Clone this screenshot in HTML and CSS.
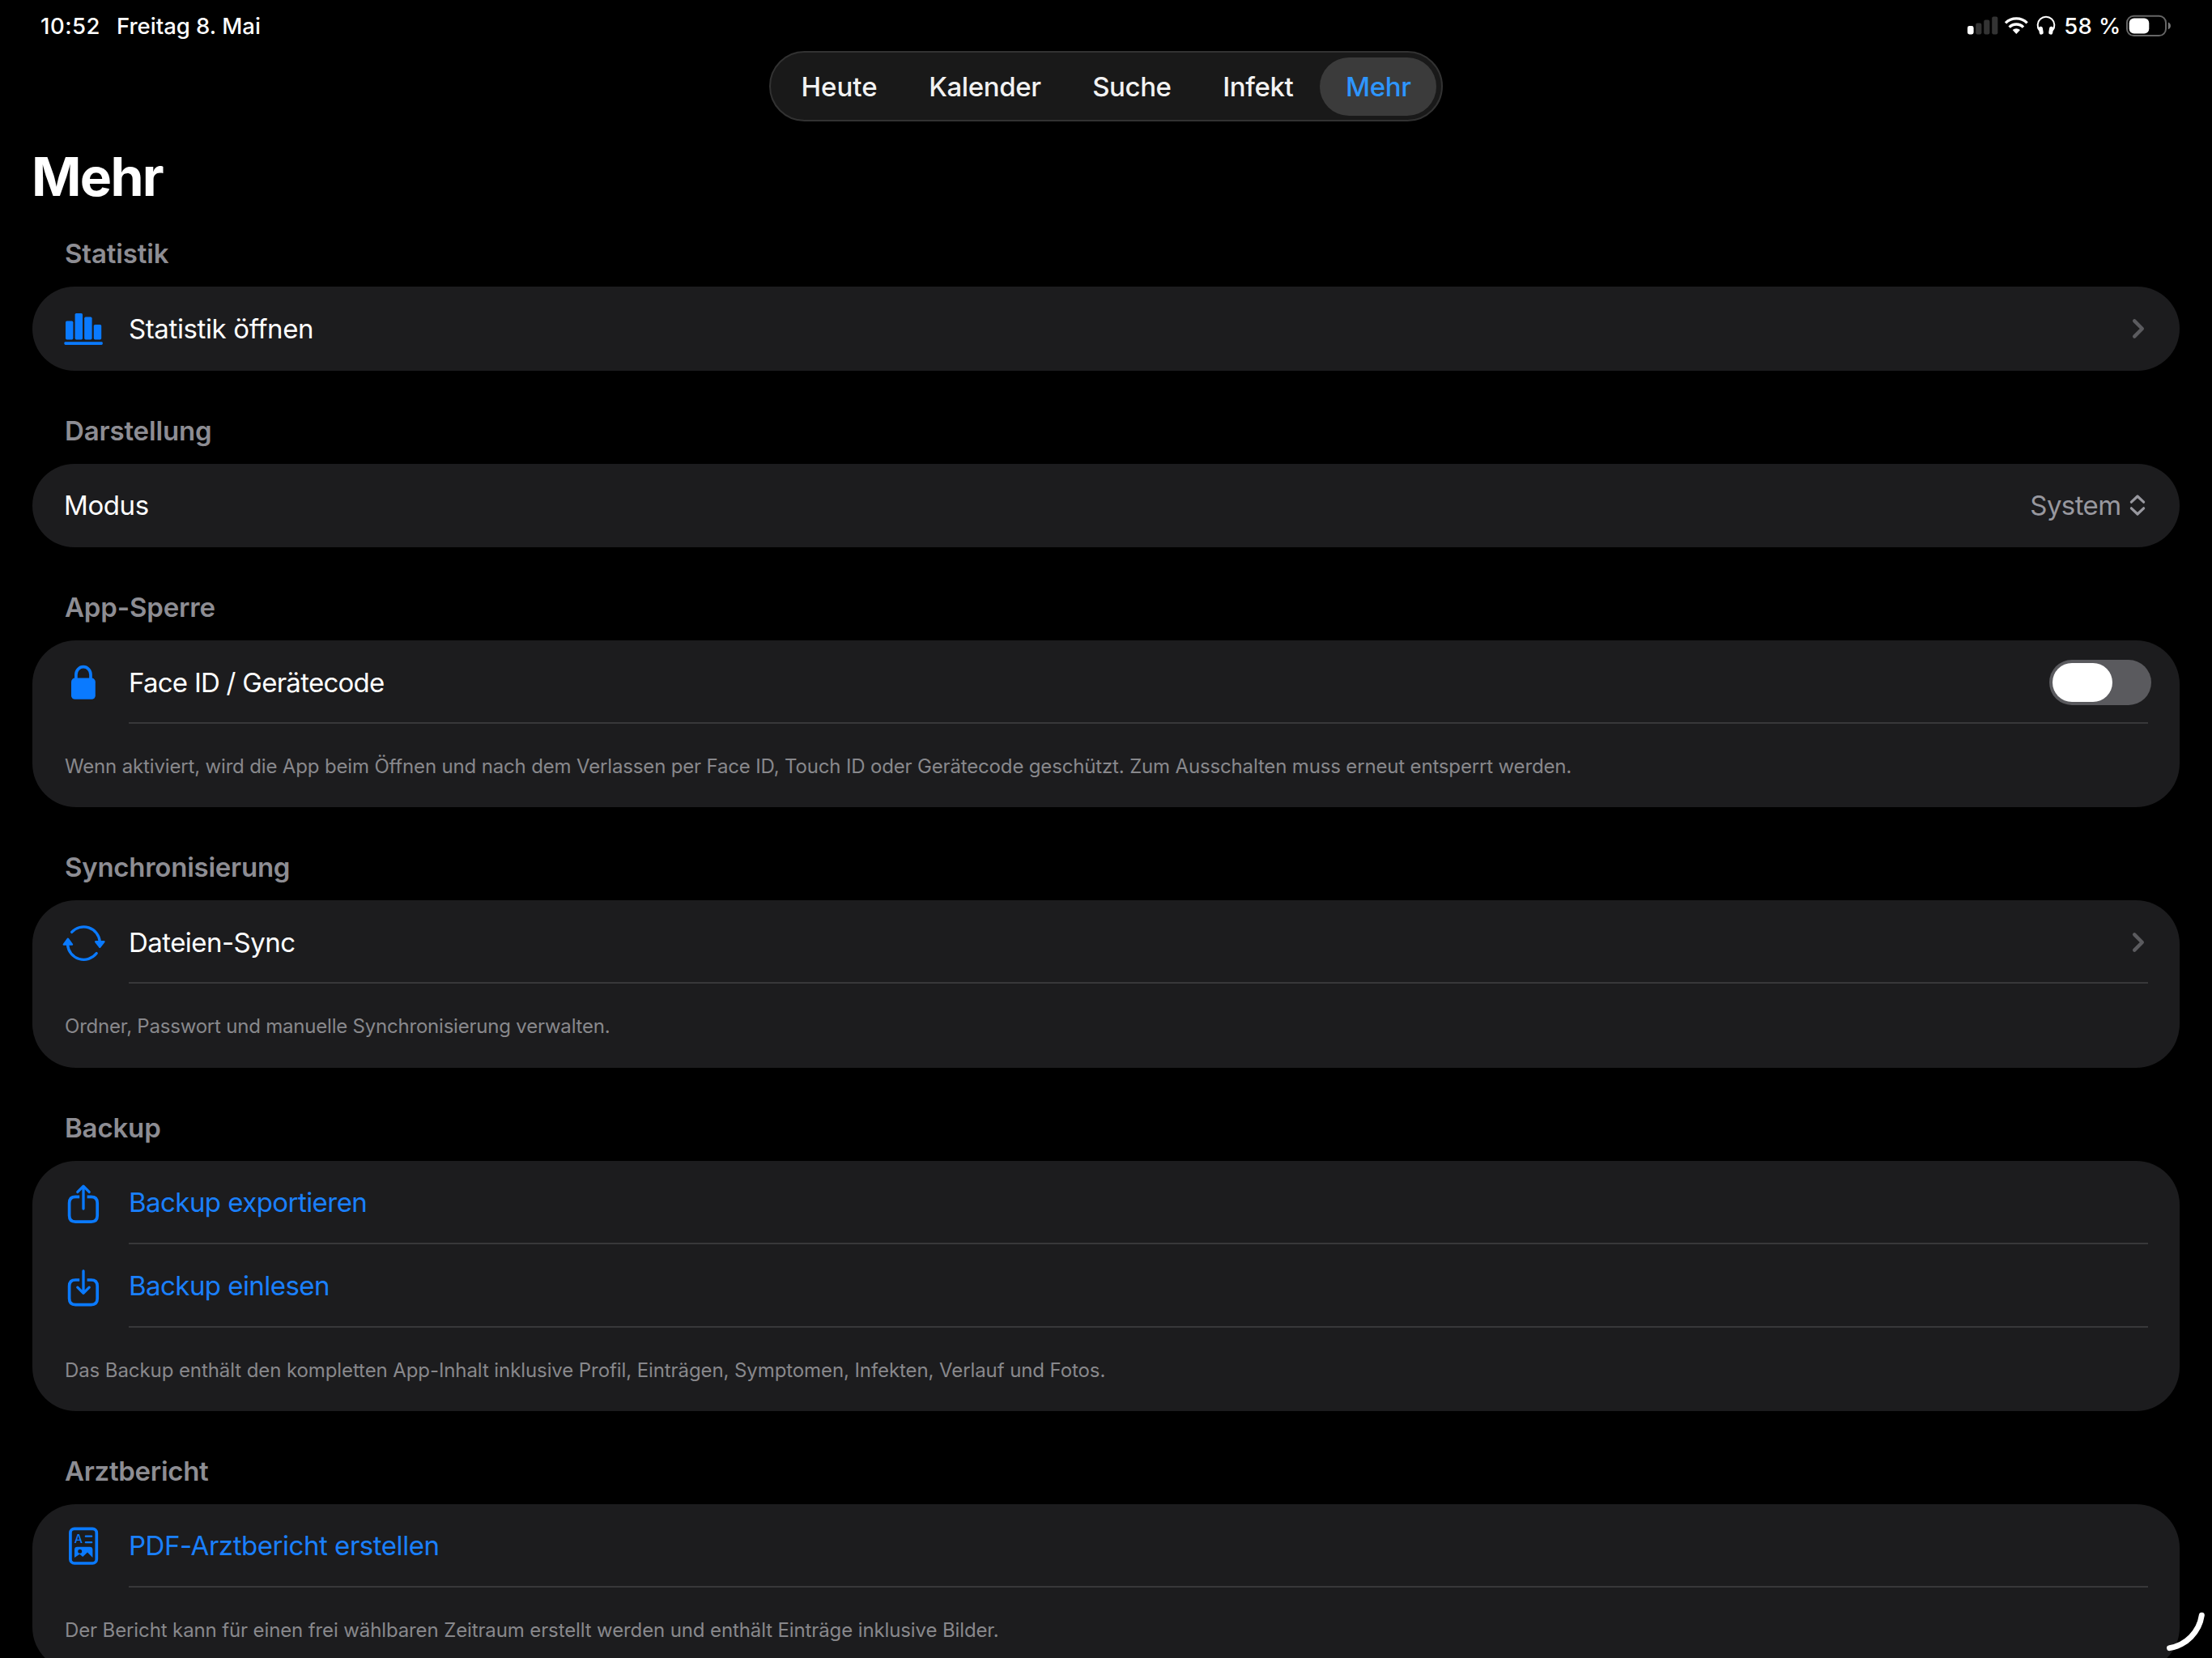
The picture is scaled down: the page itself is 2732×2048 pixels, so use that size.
FILE: index.html
```html
<!DOCTYPE html>
<html lang="de">
<head>
    <meta charset="UTF-8">
    <meta name="viewport" content="width=device-width, initial-scale=1.0">
    <title>Mehr</title>
    <link rel="stylesheet" href="styles.css">
</head>
<body>
    <div class="status-bar">
        <div class="status-left">
            <span class="time">10:52</span>
            <span>Freitag 8. Mai</span>
        </div>
        <div class="status-right">
            <svg class="signal" viewBox="0 0 38 24">
                <rect x="0" y="12" width="7.6" height="10.4" rx="2.4" fill="#fff"/>
                <rect x="10.2" y="8.6" width="7.2" height="13.8" rx="2.2" fill="#333"/>
                <rect x="20.2" y="4.6" width="7.2" height="17.8" rx="2.2" fill="#333"/>
                <rect x="30.2" y="0.4" width="7.2" height="22" rx="2.2" fill="#333"/>
            </svg>
            <svg class="wifi" viewBox="161 25 90 69">
                <path d="M167 50A57 57 0 0 1 247 50M181 66A36 36 0 0 1 233 66" fill="none" stroke="#fff" stroke-width="10"/>
                <path d="M193 76A21 21 0 0 1 221 76L207 91Z" fill="#fff"/>
            </svg>
            <svg class="headphones" viewBox="281 24 72 74">
                <path d="M293 80A31 31 0 1 1 341 80" fill="none" stroke="#fff" stroke-width="6"/>
                <rect x="291" y="65" width="15" height="30" rx="7" fill="#fff" transform="rotate(-9 298 80)"/>
                <rect x="328" y="65" width="15" height="30" rx="7" fill="#fff" transform="rotate(9 336 80)"/>
            </svg>
            <span class="percent">58 %</span>
            <svg class="battery" viewBox="0 0 56 28">
                <rect x="1" y="1.7" width="48" height="24.4" rx="8.4" fill="none" stroke="#666" stroke-width="2"/>
                <rect x="3.7" y="4.4" width="24.6" height="19" rx="6" fill="#fff"/>
                <path d="M51.8 9.4C56 11 56 16.6 51.8 18.2Z" fill="#777"/>
            </svg>
        </div>
    </div>

    <nav class="tabs">
        <a class="tab heute">Heute</a>
        <a class="tab">Kalender</a>
        <a class="tab">Suche</a>
        <a class="tab">Infekt</a>
        <a class="tab active">Mehr</a>
    </nav>

    <main>
        <h1>Mehr</h1>

        <section class="statistik">
            <h2>Statistik</h2>
            <div class="card single">
                <div class="row">
                    <svg class="icon" viewBox="0 0 56 56">
                        <rect x="6" y="18.6" width="9.4" height="22.8" rx="1.6"/>
                        <rect x="17.6" y="9" width="9.4" height="32.4" rx="1.6"/>
                        <rect x="29.2" y="13.6" width="9.4" height="27.8" rx="1.6"/>
                        <rect x="40.8" y="23" width="9.4" height="18.4" rx="1.6"/>
                        <rect x="4.4" y="44.2" width="47.4" height="3.8" rx="1.4"/>
                    </svg>
                    <span class="label">Statistik öffnen</span>
                    <svg class="chevron" viewBox="0 0 16 28"><path d="M3.2 4.4L12.8 14L3.2 23.6"/></svg>
                </div>
            </div>
        </section>

        <section>
            <h2>Darstellung</h2>
            <div class="card single">
                <div class="row plain">
                    <span class="label modus">Modus</span>
                    <span class="value">System</span>
                    <svg class="updown" viewBox="0 0 20 28"><path d="M2.4 10.2L10 3L17.6 10.2M2.4 17.8L10 25L17.6 17.8"/></svg>
                </div>
            </div>
        </section>

        <section class="sperre">
            <h2>App-Sperre</h2>
            <div class="card">
                <div class="row">
                    <svg class="icon" viewBox="0 0 56 56">
                        <rect x="13" y="22.6" width="29.8" height="26.2" rx="4.6"/>
                        <path class="line" d="M18.9 24V18.2a9.05 9.6 0 0 1 18.1 0V24"/>
                    </svg>
                    <span class="label">Face ID / Gerätecode</span>
                    <span class="toggle"></span>
                </div>
                <p>Wenn aktiviert, wird die App beim Öffnen und nach dem Verlassen per Face ID, Touch ID oder Gerätecode geschützt. Zum Ausschalten muss erneut entsperrt werden.</p>
            </div>
        </section>

        <section class="sync">
            <h2>Synchronisierung</h2>
            <div class="card">
                <div class="row">
                    <svg class="icon" viewBox="0 0 56 56">
                        <path class="line thin" d="M13.6 15.4A20 20 0 0 1 48.3 27M8.5 31A20 20 0 0 0 44.2 41.6"/>
                        <path class="head" d="M43.2 27.2H53.4L48.3 33.8ZM3.8 30.6H14L8.9 23.8Z"/>
                    </svg>
                    <span class="label">Dateien-Sync</span>
                    <svg class="chevron" viewBox="0 0 16 28"><path d="M3.2 4.4L12.8 14L3.2 23.6"/></svg>
                </div>
                <p>Ordner, Passwort und manuelle Synchronisierung verwalten.</p>
            </div>
        </section>

        <section class="backup">
            <h2>Backup</h2>
            <div class="card">
                <div class="row link">
                    <svg class="icon" viewBox="0 0 56 56">
                        <path class="line" d="M23.2 21.4H18.2Q10.6 21.4 10.6 29V44.6Q10.6 52.2 18.2 52.2H37.6Q45.2 52.2 45.2 44.6V29Q45.2 21.4 37.6 21.4H32.6"/>
                        <path class="line round thin" d="M28 36V8.4M20.8 15.4L28 8.2L35.2 15.4"/>
                    </svg>
                    <span class="label">Backup exportieren</span>
                </div>
                <div class="row link">
                    <svg class="icon" viewBox="0 0 56 56">
                        <path class="line" d="M23.2 21H18.2Q10.6 21 10.6 28.6V44Q10.6 51.6 18.2 51.6H37.6Q45.2 51.6 45.2 44V28.6Q45.2 21 37.6 21H32.6"/>
                        <path class="line round thin" d="M28 10V37.2M20.8 30.2L28 37.4L35.2 30.2"/>
                    </svg>
                    <span class="label">Backup einlesen</span>
                </div>
                <p>Das Backup enthält den kompletten App-Inhalt inklusive Profil, Einträgen, Symptomen, Infekten, Verlauf und Fotos.</p>
            </div>
        </section>

        <section class="bericht">
            <h2>Arztbericht</h2>
            <div class="card">
                <div class="row link">
                    <svg class="icon" viewBox="0 0 56 56">
                        <rect class="line" x="11.9" y="7.4" width="32.4" height="42.6" rx="5"/>
                        <text x="16.8" y="25.3">A</text>
                        <path class="line round detail" d="M30.8 16.7H38.2M30.8 24.2H38.2"/>
                        <path fill-rule="evenodd" d="M20.4 29.8H36Q39.4 29.8 39.4 33.2V43L33 36.4L27.2 42L23.4 38.8L17 43V33.2Q17 29.8 20.4 29.8ZM21.2 35.2a2.5 2.5 0 1 0 5 0a2.5 2.5 0 1 0 -5 0Z"/>
                    </svg>
                    <span class="label">PDF-Arztbericht erstellen</span>
                </div>
                <p>Der Bericht kann für einen frei wählbaren Zeitraum erstellt werden und enthält Einträge inklusive Bilder.</p>
            </div>
        </section>
    </main>

    <!-- corner handle -->
    <svg class="corner" viewBox="0 0 60 60">
        <path d="M47.3 15.3A48 48 0 0 1 7.6 55.6"/>
    </svg>
</body>
</html>
```

FILE: styles.css
```css
* {
    box-sizing: border-box;
}
body {
    font-family: Inter, "Liberation Sans", sans-serif;
    background-color: #000;
    color: #fff;
    margin: 0;
    height: 2048px;
    position: relative;
    overflow: hidden;
}
h1, h2, p {
    margin: 0;
}
svg {
    display: block;
    flex-shrink: 0;
}

/* status bar */
.status-bar {
    height: 63px;
    padding: 0 50px;
    display: flex;
    justify-content: space-between;
    align-items: center;
    font-size: 27.5px;
    font-weight: 500;
}
.status-left, .status-right {
    display: flex;
    align-items: center;
}
.status-left {
    gap: 20px;
}
.time {
    letter-spacing: 0.5px;
}
.signal {
    width: 38px;
    height: 24px;
    margin-right: 7px;
}
.wifi {
    width: 30px;
    height: 23px;
    margin-right: 10px;
}
.headphones {
    width: 24px;
    height: 24.7px;
    margin-right: 10.5px;
}
.percent {
    width: 76.8px;
    letter-spacing: 0.4px;
}
.battery {
    width: 56px;
    height: 28px;
}

/* tab bar */
.tabs {
    width: 832px;
    height: 87px;
    margin: 0 auto;
    padding: 0 6px 0 7px;
    display: flex;
    justify-content: space-between;
    align-items: center;
    background-color: #191919;
    border: 2px solid #323232;
    border-radius: 44px;
}
.tab {
    height: 72px;
    padding: 0 30.5px;
    line-height: 72px;
    border-radius: 36px;
    font-size: 33px;
    font-weight: 500;
    letter-spacing: -0.4px;
    color: #f2f2f2;
}
.tab.heute {
    letter-spacing: 0;
}
.tab.active {
    padding: 0 31.5px;
    background-color: #3b3b3b;
    color: #2e96ff;
}

main {
    padding: 0 40px;
}
h1 {
    height: 89px;
    padding-top: 48px;
    margin-left: -1px;
    font-size: 66px;
    font-weight: 700;
    line-height: 41px;
    letter-spacing: -1.7px;
}
h2 {
    height: 115px;
    padding: 54px 40px 0;
    font-size: 33px;
    font-weight: 600;
    line-height: 40px;
    letter-spacing: -0.15px;
    color: #8d8d93;
}
.card {
    background-color: #1c1c1e;
    border-radius: 54px;
}
.row {
    height: 103px;
    padding: 0 43px 0 35px;
    display: flex;
    align-items: center;
    background: linear-gradient(#38383a, #38383a) 119px 100% / calc(100% - 158px) 2px no-repeat;
}
.single .row {
    height: 103.5px;
    background: none;
}
.row.plain {
    padding: 0 42px 0 39px;
}
.icon {
    width: 56px;
    height: 56px;
    margin-right: 28px;
    fill: #0a7aff;
}
.icon .line {
    fill: none;
    stroke: #0a7aff;
    stroke-width: 3.7;
}
.icon .round {
    stroke-linecap: round;
    stroke-linejoin: round;
}
.icon .thin {
    stroke-width: 3.3;
    stroke-linecap: round;
}
.icon .detail {
    stroke-width: 2.2;
}
.icon .head {
    stroke: #0a7aff;
    stroke-width: 2.4;
    stroke-linejoin: round;
}
.icon text {
    font-size: 14.5px;
    font-weight: 500;
}
.label {
    flex: 1;
    font-size: 33px;
    letter-spacing: -0.55px;
}
.label.modus {
    letter-spacing: -0.4px;
}
.link .label {
    color: #1a80ff;
}
.value {
    margin-right: 10.5px;
    font-size: 33px;
    letter-spacing: -0.6px;
    color: #98989f;
}
.chevron {
    width: 16px;
    height: 28px;
    fill: none;
    stroke: #5b5b5f;
    stroke-width: 4.4;
    stroke-linecap: round;
    stroke-linejoin: round;
}
.updown {
    width: 20px;
    height: 28px;
    fill: none;
    stroke: #98989f;
    stroke-width: 3.2;
    stroke-linecap: round;
    stroke-linejoin: round;
}
.toggle {
    width: 126px;
    height: 56px;
    margin-right: -8px;
    padding: 4px;
    background-color: #5a5a5e;
    border-radius: 28px;
}
.toggle::before {
    content: "";
    display: block;
    width: 74px;
    height: 48px;
    background-color: #fff;
    border-radius: 24px;
}
.card p {
    height: 103.25px;
    padding: 0 40px;
    font-size: 24px;
    line-height: 105px;
    white-space: nowrap;
    color: #88888c;
}

/* tracking per section */
.statistik .label {
    letter-spacing: -0.38px;
}
.sperre .label {
    letter-spacing: -0.74px;
}
.sperre p {
    letter-spacing: -0.16px;
}
.sync h2 {
    letter-spacing: -0.25px;
}
.sync p {
    letter-spacing: -0.21px;
}
.backup p {
    letter-spacing: -0.09px;
}
.bericht h2 {
    letter-spacing: -0.3px;
}
.bericht .label {
    letter-spacing: -0.46px;
}
.bericht p {
    letter-spacing: -0.12px;
}

.corner {
    position: absolute;
    right: 0;
    bottom: 8px;
    width: 60px;
    height: 60px;
    fill: none;
    stroke: #fff;
    stroke-width: 7;
    stroke-linecap: round;
}
```
